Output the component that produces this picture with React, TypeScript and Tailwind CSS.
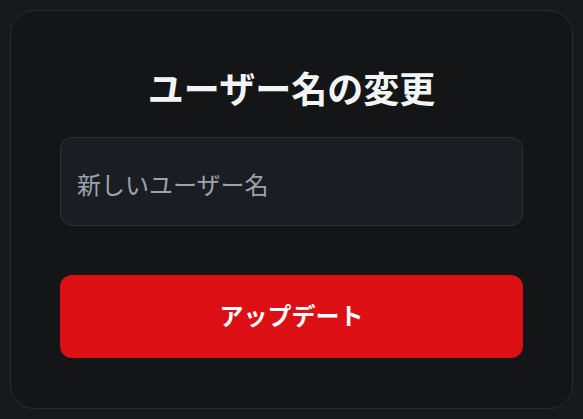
export default function App() {
  return (
    <div className="min-h-[419px] w-full bg-[#18191c] p-[10px]" style={{ fontFamily: '"Noto Sans CJK JP", "Noto Sans", sans-serif' }}>
      <div className="flex flex-col rounded-[24px] border border-[#2a2b2f] bg-[#141517] px-[49px] pt-[56px] pb-[50px]">
        <h1 className="text-center text-[36px] font-bold leading-[40px] text-[#f3f4f6]">ユーザー名の変更</h1>
        <input
          type="text"
          placeholder="新しいユーザー名"
          className="mt-[30px] h-[89px] w-full rounded-[12px] border border-[#2d3036] bg-[#1a1d21] px-[16px] pt-[3px] text-[24px] text-[#e5e7eb] placeholder:text-[#9ca3af] outline-none"
        />
        <button className="mt-[49px] h-[83px] w-full rounded-[12px] bg-[#dc0f15] pb-[3px] text-[24px] font-bold text-white">
          アップデート
        </button>
      </div>
    </div>
  );
}
